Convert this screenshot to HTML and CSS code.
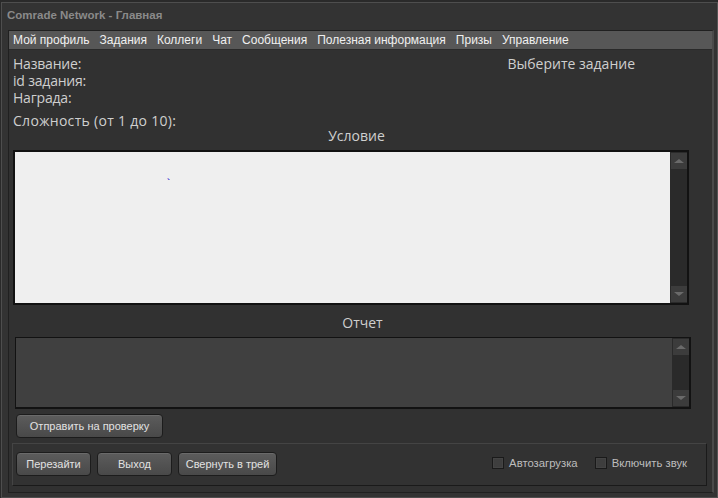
FILE: index.html
```html
<!DOCTYPE html>
<html lang="ru">
<head>
<meta charset="utf-8">
<title>Comrade Network - Главная</title>
<link rel="stylesheet" href="styles.css">
</head>
<body>
<div class="window">
  <div class="titlebar">Comrade Network - Главная</div>
  <div class="client">
    <div class="menubar">
      <span class="menu-item">Мой профиль</span>
      <span class="menu-item">Задания</span>
      <span class="menu-item">Коллеги</span>
      <span class="menu-item">Чат</span>
      <span class="menu-item">Сообщения</span>
      <span class="menu-item">Полезная информация</span>
      <span class="menu-item">Призы</span>
      <span class="menu-item">Управление</span>
    </div>
    <div class="content">
      <div class="info">
        <div class="info-left">
          <div class="lbl">Название:</div>
          <div class="lbl">id задания:</div>
          <div class="lbl">Награда:</div>
        </div>
        <div class="info-right">Выберите задание</div>
      </div>
      <div class="lbl difficulty">Сложность (от 1 до 10):</div>
      <div class="caption cond-cap">Условие</div>
      <div class="textbox light">
        <div class="text-area"><span class="dot">`</span></div>
        <div class="scrollbar">
          <div class="sb-btn"><span class="arr up"></span></div>
          <div class="sb-track"></div>
          <div class="sb-btn"><span class="arr down"></span></div>
        </div>
      </div>
      <div class="caption rep-cap">Отчет</div>
      <div class="textbox dark">
        <div class="text-area"></div>
        <div class="scrollbar">
          <div class="sb-btn"><span class="arr up"></span></div>
          <div class="sb-track"></div>
          <div class="sb-btn"><span class="arr down"></span></div>
        </div>
      </div>
      <div class="send-row">
        <button class="btn send">Отправить на проверку</button>
      </div>
      <div class="bottom-panel">
        <div class="btn-group">
          <button class="btn b-relog">Перезайти</button>
          <button class="btn b-exit">Выход</button>
          <button class="btn b-tray">Свернуть в трей</button>
        </div>
        <div class="checks">
          <label class="check"><span class="box"></span>Автозагрузка</label>
          <label class="check"><span class="box"></span>Включить звук</label>
        </div>
      </div>
    </div>
  </div>
</div>
</body>
</html>
```
FILE: styles.css
```css
* { box-sizing: border-box; }
html, body {
  margin: 0;
  padding: 0;
  width: 718px;
  height: 498px;
  overflow: hidden;
  background: #2a2a2a;
  font-family: "Liberation Sans", Arial, sans-serif;
}
.window {
  margin: 2px 0 0 1px;
  width: 717px;
  height: 496px;
  background: #333333;
  border: 1px solid #4e4e4e;
  border-right-color: #555;
  display: flex;
  flex-direction: column;
}
.titlebar {
  height: 27px;
  padding: 6px 0 0 5px;
  font-family: "Liberation Sans", Arial, sans-serif;
  font-weight: bold;
  font-size: 11.5px;
  color: #8a8a8a;
}
.client {
  flex: 1;
  margin: 0 3px 4px 6px;
  border: 1px solid #202020;
  border-right: 2px solid #4a4a4a;
  display: flex;
  flex-direction: column;
  background: #313131;
}
.menubar {
  height: 19px;
  background: #575757;
  border-bottom: 1px solid #2a2a2a;
  display: flex;
  align-items: center;
  padding-left: 4px;
}
.menu-item {
  font-size: 12px;
  color: #f0f0f0;
  padding: 0 5px 0 0;
  margin-right: 5px;
  white-space: nowrap;
}
.content {
  flex: 1;
  display: flex;
  flex-direction: column;
  padding: 5px 0 0 4px;
}
.info {
  display: flex;
  justify-content: space-between;
}
.lbl, .info-right, .caption {
  font-family: "Open Sans", "Liberation Sans", sans-serif;
  font-size: 14px;
  color: #cfcfcf;
  line-height: 17px;
  height: 17px;
  overflow: visible;
}
.lbl { letter-spacing: -0.2px; }
.info-right {
  margin-right: 77px;
}
.difficulty {
  margin-top: 6px;
  letter-spacing: 0.3px;
}
.caption { text-align: center; }
.cond-cap { margin: -2px 0 0 -12px; }
.textbox {
  display: flex;
  border: 2px solid #121212;
}
.textbox.light {
  height: 155px;
  margin: 6px 23px 0 0;
  background: #efefef;
}
.textbox.dark {
  height: 72px;
  margin: 6px 21px 0 2px;
  background: #404040;
  border-width: 1px 2px 2px 1px;
}
.rep-cap { margin-top: 9px; padding-left: 0; }
.text-area { flex: 1; position: relative; }
.dot {
  position: absolute;
  left: 152px;
  top: 26px;
  color: #1a1acc;
  font-size: 9px;
  line-height: 9px;
  font-weight: bold;
}
.scrollbar {
  width: 17px;
  background: #2a2a2a;
  display: flex;
  flex-direction: column;
  border-left: 1px solid #2a2a2a;
}
.sb-btn {
  height: 16px;
  background: #3c3c3c;
  display: flex;
  align-items: center;
  justify-content: center;
  margin: 1px 0;
}
.sb-track { flex: 1; }
.arr {
  width: 0;
  height: 0;
  border-left: 5px solid transparent;
  border-right: 5px solid transparent;
}
.arr.up { border-bottom: 4px solid #6a6a6a; }
.arr.down { border-top: 4px solid #6a6a6a; }
.send-row {
  padding: 5px 0 0 3px;
}
.btn {
  height: 24px;
  font-family: "Liberation Sans", Arial, sans-serif;
  font-size: 11px;
  color: #e2e2e2;
  border: 1px solid #1c1c1c;
  border-radius: 4px;
  background: linear-gradient(#5c5c5c, #494949);
  box-shadow: inset 0 1px 0 #6a6a6a;
  padding: 0;
}
.send { width: 147px; }
.bottom-panel {
  margin: 5px 5px 3px -1px;
  height: 43px;
  border: 1px solid #444;
  border-bottom-color: #1a1a1a;
  border-right-color: #1a1a1a;
  background: #323232;
  display: flex;
  align-items: center;
  justify-content: space-between;
  padding: 0 19px 0 3px;
}
.btn-group { display: flex; gap: 6px; margin-top: -2px; }
.b-relog { width: 75px; }
.b-exit { width: 75px; }
.b-tray { width: 99px; }
.checks { display: flex; gap: 17px; margin-top: -4px; }
.check {
  display: flex;
  align-items: center;
  font-size: 11.3px;
  color: #bdbdbd;
}
.box {
  width: 12px;
  height: 12px;
  border: 1px solid #1a1a1a;
  background: #3e3e3e;
  box-shadow: inset 0 0 0 1px #444;
  margin-right: 5px;
}
```
